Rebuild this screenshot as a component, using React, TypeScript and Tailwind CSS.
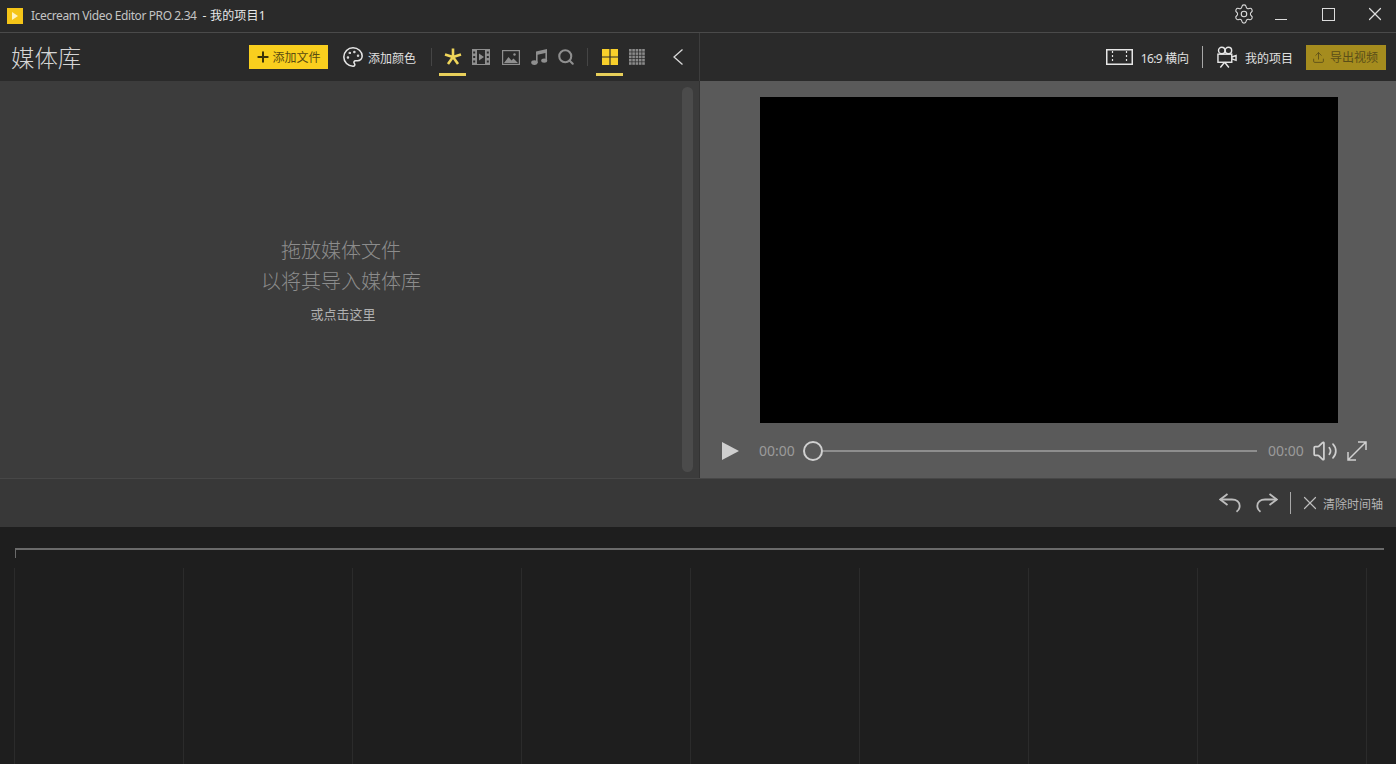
import { Palette, Plus, Search, Settings, Upload, Volume2, X } from 'lucide-react';

const font = { fontFamily: '"Noto Sans", "Noto Sans CJK SC", sans-serif' };

function StarIcon() {
  return (
    <svg width="18" height="18" viewBox="0 0 18 18" stroke="#f0d65a" strokeWidth="2.6" strokeLinecap="butt">
      <path d="M9 0.5V9M9 9 1 6.4M9 9l8-2.6M9 9l-5 6.9M9 9l5 6.9" fill="none" />
    </svg>
  );
}

function FilmIcon() {
  return (
    <svg width="18" height="16" viewBox="0 0 18 16" fill="#8f8f8f">
      <path d="M0 0h18v16H0z" />
      <path fill="#2a2a2a" d="M5 1h8v14H5zM1.2 2.5h2v2h-2zM1.2 7h2v2h-2zM1.2 11.5h2v2h-2zM14.8 2.5h2v2h-2zM14.8 7h2v2h-2zM14.8 11.5h2v2h-2z" />
      <path d="M7 4.5l5 3.5-5 3.5z" />
    </svg>
  );
}

function ImageIcon() {
  return (
    <svg width="18" height="15" viewBox="0 0 18 15" fill="none">
      <rect x="0.6" y="0.6" width="16.8" height="13.8" stroke="#8f8f8f" strokeWidth="1.2" />
      <path d="M2 13l4.5-6 3 3.5 2-2L16 13z" fill="#8f8f8f" />
      <circle cx="12.5" cy="4.5" r="1.2" fill="#8f8f8f" />
    </svg>
  );
}

function MusicIcon() {
  return (
    <svg width="17" height="16" viewBox="0 0 17 16" fill="#8f8f8f">
      <path d="M5 2.5 16 0v11.5h-1.6V4L6.6 5.8V14H5z" />
      <ellipse cx="3.4" cy="13.6" rx="3.2" ry="2.3" />
      <ellipse cx="13.2" cy="11.6" rx="3" ry="2.2" />
    </svg>
  );
}

function BigGrid() {
  return (
    <svg width="16" height="16" viewBox="0 0 16 16" fill="#f7cf2b">
      <path d="M0 0h7.4v7.4H0zM8.6 0H16v7.4H8.6zM0 8.6h7.4V16H0zM8.6 8.6H16V16H8.6z" />
    </svg>
  );
}

function SmallGrid() {
  const cells = [0, 1, 2, 3, 4];
  return (
    <svg width="16" height="16" viewBox="0 0 16 16" fill="#8a8a8a">
      {cells.map((r) => cells.map((c) => <rect key={`${r}-${c}`} x={c * 3.3} y={r * 3.3} width="2.6" height="2.6" />))}
    </svg>
  );
}

function BackIcon() {
  return (
    <svg width="10" height="16" viewBox="0 0 10 16" fill="none" stroke="#d8d8d8" strokeWidth="1.3">
      <path d="M9.5 0.5 1 8l8.5 7.5" />
    </svg>
  );
}

function RatioIcon() {
  return (
    <svg width="27" height="16" viewBox="0 0 27 16" fill="none" stroke="#e6e6e6">
      <rect x="0.75" y="0.75" width="25.5" height="14.5" strokeWidth="1.5" />
      <path d="M6.5 2v12M20.5 2v12" strokeWidth="1.2" strokeDasharray="2 2" />
    </svg>
  );
}

function CameraIcon() {
  return (
    <svg width="20" height="23" viewBox="0 0 21 23" fill="none" stroke="#e6e6e6" strokeWidth="1.5">
      <circle cx="5" cy="4.2" r="3.4" />
      <circle cx="12" cy="4.2" r="3.4" />
      <rect x="1" y="8" width="14.5" height="8.5" />
      <path d="M15.5 11l4.5-1.5v5L15.5 13M8 16.5 3.5 22M8 16.5l4.5 5.5" />
    </svg>
  );
}

function ExpandIcon() {
  return (
    <svg width="20" height="20" viewBox="0 0 20 20" fill="none" stroke="#d0d0d0" strokeWidth="1.5">
      <path d="M1 19 19 1M11 1h8v8M1 11v8h8" />
    </svg>
  );
}

function UndoIcon({ flip }: { flip?: boolean }) {
  return (
    <svg width="22" height="20" viewBox="0 0 22 20" fill="none" stroke="#bdbdbd" strokeWidth="1.8" className={flip ? '-scale-x-100' : ''}>
      <path d="M8.5 1 1.3 6.5 8.5 12" />
      <path d="M1.3 6.5H13c4.5 0 7.7 2.5 7.7 6.5 0 2.2-1 4.2-3.2 5.8" />
    </svg>
  );
}

export default function App() {
  return (
    <div className="flex h-[764px] w-[1396px] flex-col overflow-hidden bg-[#1e1e1e] text-white" style={font}>
      {/* Title bar */}
      <div className="flex h-[33px] shrink-0 items-center border-b border-[#4a4a4a] bg-[#2a2a2a] pl-[7px]">
        <div className="flex h-[16px] w-[16px] items-center justify-center bg-[#f5c518]">
          <div className="h-0 w-0 border-y-[4px] border-l-[6px] border-y-transparent border-l-[#fff3c0]" />
        </div>
        <span className="ml-[8px] text-[12px] tracking-[-0.4px] text-[#c4c4c4]">Icecream Video Editor PRO 2.34</span>
        <span className="ml-[6px] text-[12px] tracking-[0.2px] text-[#e8e8e8]">- 我的项目1</span>
        <div className="ml-auto flex items-center">
          <Settings size={22} strokeWidth={1.2} className="mb-[4px] text-[#dcdcdc]" />
          <div className="ml-[20px] mt-[6px] h-px w-[12px] bg-[#dcdcdc]" />
          <div className="mb-[4px] ml-[35px] h-[13px] w-[13px] border border-[#dcdcdc]" />
          <X size={22} strokeWidth={1.3} className="mb-[4px] ml-[29px] mr-[10px] text-[#dcdcdc]" />
        </div>
      </div>

      {/* Main toolbars */}
      <div className="flex h-[48px] shrink-0 bg-[#2a2a2a]">
        <div className="flex w-[700px] shrink-0 items-center border-r border-[#3d3d3d] pl-[11px]">
          <span className="w-[70px] whitespace-nowrap pt-[3px] text-[23.4px] font-light leading-none text-[#d6d6d6]">媒体库</span>
          <button className="ml-[168px] flex h-[24px] w-[79px] items-center justify-center gap-[1px] bg-[#f9cf1e] pr-[1px] text-[12px] text-[#5a4c10]">
            <Plus size={16} strokeWidth={3} className="text-[#3a3208]" />
            <span className="pt-[2px]">添加文件</span>
          </button>
          <Palette size={22} strokeWidth={1.7} className="ml-[14px] text-[#e6e6e6]" />
          <span className="ml-[4px] pt-[3px] text-[12px] text-[#e0e0e0]">添加颜色</span>
          <div className="ml-[15px] h-[18px] w-px bg-[#454545]" />
          <div className="relative ml-[7px] flex h-[48px] w-[27px] items-center justify-center">
            <StarIcon />
            <div className="absolute bottom-[5px] left-0 h-[3px] w-[27px] bg-[#e8cf5a]" />
          </div>
          <div className="ml-[6px]"><FilmIcon /></div>
          <div className="ml-[12px]"><ImageIcon /></div>
          <div className="ml-[11px]"><MusicIcon /></div>
          <Search size={18} strokeWidth={2.8} className="ml-[9px] text-[#8f8f8f]" />
          <div className="ml-[12px] h-[18px] w-px bg-[#454545]" />
          <div className="relative ml-[8px] flex h-[48px] w-[27px] items-center justify-center">
            <BigGrid />
            <div className="absolute bottom-[5px] left-0 h-[3px] w-[27px] bg-[#e8cf5a]" />
          </div>
          <div className="ml-[6px]"><SmallGrid /></div>
          <div className="ml-[28px]"><BackIcon /></div>
        </div>
        <div className="flex flex-1 items-center justify-end pr-[10px]">
          <RatioIcon />
          <span className="ml-[8px] pt-[3px] text-[12px] text-[#e0e0e0]">
            <span className="tracking-[-0.7px]">16:9</span> 横向
          </span>
          <div className="ml-[13px] h-[22px] w-px bg-[#a8a8a8]" />
          <div className="ml-[14px]"><CameraIcon /></div>
          <span className="ml-[8px] pt-[3px] text-[12px] text-[#e0e0e0]">我的项目</span>
          <button className="ml-[13px] flex h-[25px] w-[80px] items-center justify-center gap-[5px] bg-[#a58c1e] pr-[2px] text-[12px] text-[#5a4e18]">
            <Upload size={13} strokeWidth={1.6} />
            <span className="pt-[2px]">导出视频</span>
          </button>
        </div>
      </div>

      {/* Library and preview */}
      <div className="flex h-[397px] shrink-0">
        <div className="flex w-[700px] shrink-0 border-r border-[#333333] bg-[#3c3c3c]">
          <div className="flex flex-1 flex-col items-center justify-center pb-[1px]">
            <p className="text-[20px] font-light leading-[31px] text-[#8c8c8c]">拖放媒体文件</p>
            <p className="text-[20px] font-light leading-[31px] text-[#8c8c8c]">以将其导入媒体库</p>
            <p className="ml-[4px] mt-[8px] text-[13px] leading-[18px] text-[#b0b0b0]">或点击这里</p>
          </div>
          <div className="my-[6px] mr-[6px] w-[11px] rounded-full bg-[#4b4b4b]" />
        </div>
        <div className="flex flex-1 flex-col bg-[#5a5a5a]">
          <div className="ml-[60px] mt-[16px] h-[326px] w-[578px] bg-black" />
          <div className="flex flex-1 items-center pl-[22px] pr-[29px]">
            <div className="h-0 w-0 border-y-[9px] border-l-[17px] border-y-transparent border-l-[#cfcfcf]" />
            <span className="ml-[20px] w-[35px] text-[14px] text-[#9a9a9a]">00:00</span>
            <div className="ml-[9px] h-[20px] w-[20px] shrink-0 rounded-full border-2 border-[#d0d0d0]" />
            <div className="h-[2px] flex-1 bg-[#8e8e8e]" />
            <span className="ml-[11px] w-[35px] text-[14px] text-[#9a9a9a]">00:00</span>
            <Volume2 size={26} strokeWidth={1.6} className="ml-[9px] text-[#d0d0d0]" />
            <div className="ml-[9px]"><ExpandIcon /></div>
          </div>
        </div>
      </div>

      {/* Timeline toolbar */}
      <div className="flex h-[49px] shrink-0 items-center justify-end border-t border-[#474747] bg-[#383838] pr-[13px]">
        <UndoIcon />
        <div className="ml-[15px]"><UndoIcon flip /></div>
        <div className="ml-[12px] h-[22px] w-px bg-[#a8a8a8]" />
        <X size={22} strokeWidth={1.3} className="ml-[8px] text-[#bdbdbd]" />
        <span className="ml-[2px] pt-[3px] text-[12px] text-[#b4b4b4]">清除时间轴</span>
      </div>

      {/* Timeline */}
      <div className="flex-1 bg-[#1e1e1e] pl-[14px] pr-[11px] pt-[21px]">
        <div className="mx-px h-[10px] border-l border-t-2 border-[#6a6a6a]" />
        <div className="mt-[10px] flex h-[200px]">
          {[0, 1, 2, 3, 4, 5, 6, 7, 8].map((i) => (
            <div key={i} className="w-[169px] shrink-0 border-l border-[#2b2b2b]" />
          ))}
        </div>
      </div>
    </div>
  );
}
